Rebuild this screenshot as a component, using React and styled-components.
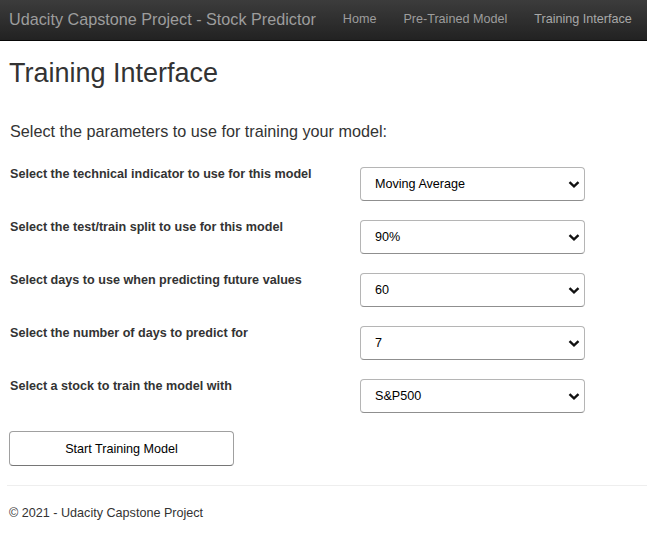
import React from 'react';
import styled, {createGlobalStyle} from 'styled-components';

const Global = createGlobalStyle`
  body {
    margin: 0;
    font-family: "Liberation Sans", Arial, sans-serif;
    font-size: 12.6px;
    color: #333;
    background: #fff;
  }
`;

const Navbar = styled.nav`
  height: 40px;
  display: flex;
  align-items: center;
  padding: 0 15px 0 9px;
  gap: 27px;
  background-image: linear-gradient(to bottom, #3c3c3c 0%, #222 100%);
  border-bottom: 1px solid #080808;
  white-space: nowrap;
`;

const Brand = styled.a`
  font-size: 16.2px;
  color: #9d9d9d;
  text-decoration: none;
  margin-top: -1px;
`;

const NavLink = styled.a`
  font-size: 12.6px;
  color: ${p => (p.active ? '#a8a8a8' : '#9d9d9d')};
  text-decoration: none;
  margin-top: -2px;
`;

const Container = styled.main`
  padding: 0 0 0 10px;
`;

const Title = styled.h2`
  font-size: 27px;
  font-weight: 500;
  line-height: 30px;
  margin: 17px 0 0 -1px;
  color: #333;
`;

const Lead = styled.h4`
  font-size: 16.2px;
  font-weight: 500;
  line-height: 18px;
  margin: 34px 0 25px;
  color: #333;
`;

const Form = styled.form`
  display: flex;
  flex-direction: column;
  gap: 17px;
`;

const Row = styled.div`
  display: grid;
  grid-template-columns: 350px 225px;
  align-items: start;
`;

const Label = styled.label`
  font-size: 12.6px;
  font-weight: bold;
  line-height: 18px;
  color: #333;
`;

const SelectWrap = styled.div`
  position: relative;
  margin-top: 2px;
`;

const Select = styled.select`
  appearance: none;
  width: 225px;
  height: 34px;
  padding: 0 30px 0 14px;
  font-family: "Liberation Sans", Arial, sans-serif;
  font-size: 12.6px;
  color: #000;
  background: #fff;
  border: 1px solid #b5b5b5;
  border-bottom-color: #8f8f8f;
  border-radius: 4px;
`;

const Chevron = styled.svg`
  position: absolute;
  right: 5px;
  top: 14px;
  pointer-events: none;
`;

const Button = styled.button`
  margin-top: 18px;
  width: 225px;
  height: 35px;
  font-family: "Liberation Sans", Arial, sans-serif;
  font-size: 12.6px;
  color: #000;
  background: #fff;
  border: 1px solid #a0a0a0;
  border-bottom-color: #767676;
  border-radius: 4px;
  margin-left: -1px;
`;

const Rule = styled.hr`
  border: 0;
  border-top: 1px solid #eee;
  margin: 19px 0 18px -3px;
`;

const Footer = styled.footer`
  font-size: 12.6px;
  line-height: 18px;
  color: #333;
  margin-left: -1px;
`;

const fields = [
  {label: 'Select the technical indicator to use for this model', options: ['Moving Average', 'Exponential Moving Average', 'RSI']},
  {label: 'Select the test/train split to use for this model', options: ['90%', '80%', '70%']},
  {label: 'Select days to use when predicting future values', options: ['60', '30', '90']},
  {label: 'Select the number of days to predict for', options: ['7', '14', '30']},
  {label: 'Select a stock to train the model with', options: ['S&P500', 'AAPL', 'MSFT']},
];

export default function App() {
  return (
    <>
      <Global />
      <Navbar>
        <Brand href="#">Udacity Capstone Project - Stock Predictor</Brand>
        <NavLink href="#">Home</NavLink>
        <NavLink href="#">Pre-Trained Model</NavLink>
        <NavLink href="#" active>Training Interface</NavLink>
      </Navbar>
      <Container>
        <Title>Training Interface</Title>
        <Lead>Select the parameters to use for training your model:</Lead>
        <Form onSubmit={e => e.preventDefault()}>
          {fields.map(f => (
            <Row key={f.label}>
              <Label>{f.label}</Label>
              <SelectWrap>
                <Select defaultValue={f.options[0]}>
                  {f.options.map(o => (
                    <option key={o}>{o}</option>
                  ))}
                </Select>
                <Chevron width="12" height="7" viewBox="0 0 12 7">
                  <path d="M1.5 1.2 L6 5.3 L10.5 1.2" fill="none" stroke="#111" strokeWidth="2.4" />
                </Chevron>
              </SelectWrap>
            </Row>
          ))}
        </Form>
        <Button type="button">Start Training Model</Button>
        <Rule />
        <Footer>© 2021 - Udacity Capstone Project</Footer>
      </Container>
    </>
  );
}
